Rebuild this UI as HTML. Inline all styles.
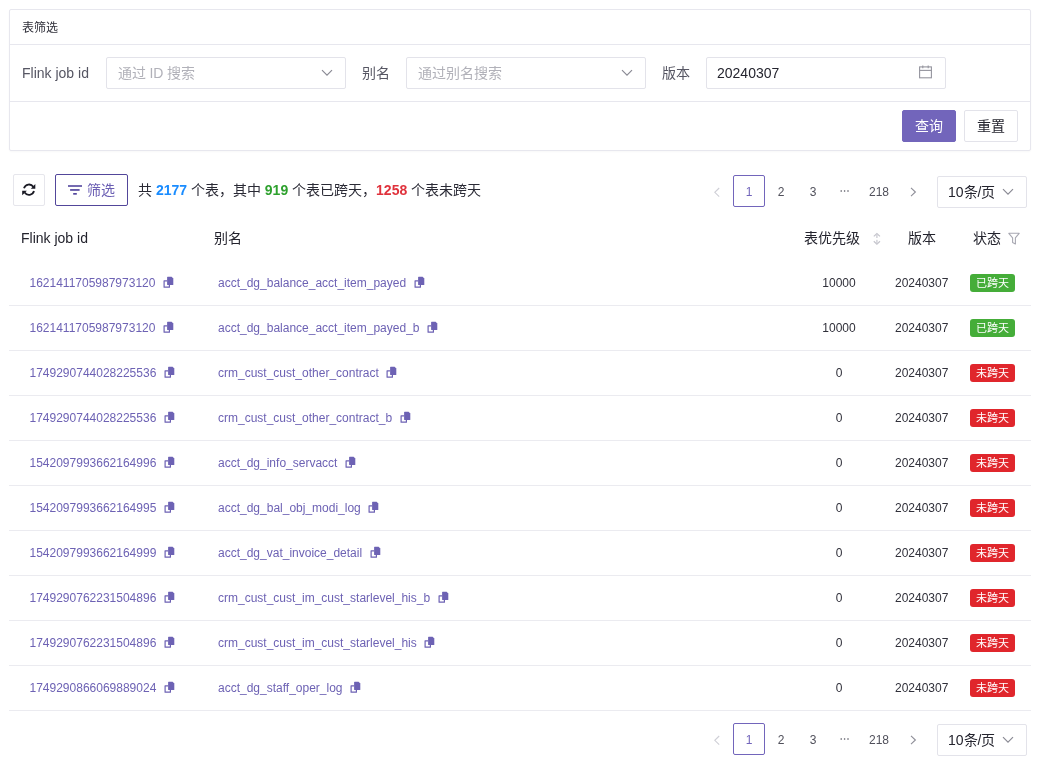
<!DOCTYPE html>
<html lang="zh-CN"><head><meta charset="utf-8">
<style>
*{box-sizing:border-box;margin:0;padding:0}
html,body{width:1037px;height:767px;overflow:hidden;background:#fff}
body{font-family:"Liberation Sans",sans-serif;color:#2a2a35;position:relative;will-change:transform}
.a{position:absolute;white-space:nowrap}
.card{left:9px;top:9px;width:1022px;height:142px;border:1px solid #e7e7ee;border-radius:2px;box-shadow:0 1px 2px rgba(0,0,0,.03)}
.hl{height:1px;background:#e7e7ee}
.lbl{font-size:14px;color:#565663;line-height:16px}
.inp{height:32px;border:1px solid #e3e3ea;border-radius:2px;background:#fff}
.ph{font-size:14px;color:#b1b1b9;line-height:16px}
.btn{height:32px;border-radius:2px;font-size:14px;line-height:30px;text-align:center}
.rowline{left:9px;width:1022px;height:1px;background:#ebebf0}
.id{font-size:12px;color:#6d62b4;line-height:14px}
.num{font-size:12px;color:#30303a;line-height:14px}
.tag{width:45px;height:18px;border-radius:3px;color:#fff;font-size:11px;line-height:19px;text-align:center}
.g{background:#45ad39}
.r{background:#e0262c}
.th{font-size:14px;color:#23232d;line-height:16px}
.pg{font-size:12px;color:#50505b;line-height:14px;text-align:center;width:32px}
</style></head><body>

<!-- filter card -->
<div class="a card"></div>
<div class="a" style="left:22px;top:20.5px;font-size:12px;line-height:14px;color:#30303a">表筛选</div>
<div class="a hl" style="left:10px;top:44px;width:1020px"></div>
<div class="a lbl" style="left:22px;top:65px">Flink job id</div>
<div class="a inp" style="left:106px;top:57px;width:240px"></div>
<div class="a ph" style="left:117.5px;top:65px">通过 ID 搜索</div>
<svg class="a" style="left:321px;top:69px" width="12" height="8" viewBox="0 0 12 8"><path d="M1 1.2 L6 6.2 L11 1.2" fill="none" stroke="#8a8a94" stroke-width="1.2"></path></svg>
<div class="a lbl" style="left:362px;top:65px">别名</div>
<div class="a inp" style="left:406px;top:57px;width:240px"></div>
<div class="a ph" style="left:418px;top:65px">通过别名搜索</div>
<svg class="a" style="left:621px;top:69px" width="12" height="8" viewBox="0 0 12 8"><path d="M1 1.2 L6 6.2 L11 1.2" fill="none" stroke="#8a8a94" stroke-width="1.2"></path></svg>
<div class="a lbl" style="left:662px;top:65px">版本</div>
<div class="a inp" style="left:706px;top:57px;width:240px"></div>
<div class="a" style="left:717px;top:65px;font-size:14px;line-height:16px;color:#24242e">20240307</div>
<svg class="a" style="left:918px;top:64px" width="15" height="15" viewBox="0 0 15 15"><rect x="1.6" y="2.9" width="11.8" height="10.9" fill="none" stroke="#94949e" stroke-width="1.1"></rect><line x1="1.6" y1="6.4" x2="13.4" y2="6.4" stroke="#94949e" stroke-width="1.1"></line><line x1="4.8" y1="1.4" x2="4.8" y2="4.2" stroke="#94949e" stroke-width="1.1"></line><line x1="10.2" y1="1.4" x2="10.2" y2="4.2" stroke="#94949e" stroke-width="1.1"></line></svg>
<div class="a hl" style="left:10px;top:101px;width:1020px"></div>
<div class="a btn" style="left:902px;top:110px;width:54px;background:#7265bb;color:#fff;border:1px solid #7265bb">查询</div>
<div class="a btn" style="left:964px;top:110px;width:54px;border:1px solid #e3e3ea;color:#23232d">重置</div>

<!-- toolbar -->
<div class="a" style="left:13px;top:174px;width:32px;height:32px;border:1px solid #e6e6ec;border-radius:2px"></div>
<svg class="a" style="left:18px;top:179px" width="22" height="22" viewBox="0 0 22 22"><path d="M6 9.3 A5.2 5.2 0 0 1 15.3 7.8" fill="none" stroke="#1a1a24" stroke-width="1.8"></path><path d="M17.3 5 L17.3 9.7 L12.8 9.7 Z" fill="#1a1a24"></path><path d="M16 12.1 A5.2 5.2 0 0 1 6.7 13.6" fill="none" stroke="#1a1a24" stroke-width="1.8"></path><path d="M4.2 11.8 L8.9 11.8 L4.2 16.2 Z" fill="#1a1a24"></path></svg>
<div class="a" style="left:55px;top:174px;width:73px;height:32px;border:1px solid #52469a;border-radius:2px"></div>
<svg class="a" style="left:66px;top:183px" width="18" height="14" viewBox="0 0 18 14"><rect x="2" y="2.2" width="14" height="1.6" fill="#54489f"></rect><rect x="4.1" y="6.1" width="9.5" height="1.7" fill="#54489f"></rect><rect x="7.2" y="10" width="3.6" height="1.7" fill="#54489f"></rect></svg>
<div class="a" style="left:87px;top:182px;font-size:14px;line-height:16px;color:#6a5eb3">筛选</div>
<div class="a" style="left:138px;top:182px;font-size:14px;line-height:16px;color:#2a2a35">共 <b style="color:#1a8cff">2177</b> 个表，其中 <b style="color:#2ea12e">919</b> 个表已跨天，<b style="color:#e0323c">1258</b> 个表未跨天</div>

<!-- pagination top -->
<div id="pgtop"><svg class="a" style="left:712px;top:187px" width="10" height="11" viewBox="0 0 10 11"><path d="M7.2 1 L2.8 5.3 L7.2 9.6" fill="none" stroke="#cfcfd6" stroke-width="1.1"></path></svg><div class="a pg" style="left:733px;top:175px;height:32px;line-height:32px;border:1px solid #7265bb;border-radius:2px;color:#7265bb">1</div><div class="a pg" style="left:765px;top:176px;line-height:32px">2</div><div class="a pg" style="left:797px;top:176px;line-height:32px">3</div><svg class="a" style="left:839px;top:189px" width="12" height="4" viewBox="0 0 12 4"><circle cx="2.2" cy="2" r="0.8" fill="#50505b"></circle><circle cx="5.6" cy="2" r="0.8" fill="#50505b"></circle><circle cx="9" cy="2" r="0.8" fill="#50505b"></circle></svg><div class="a pg" style="left:861px;width:36px;top:176px;line-height:32px">218</div><svg class="a" style="left:908px;top:187px" width="10" height="10" viewBox="0 0 10 10"><path d="M3 0.8 L7.4 5 L3 9.2" fill="none" stroke="#8e8e98" stroke-width="1.1"></path></svg><div class="a" style="left:937px;top:176px;width:90px;height:32px;border:1px solid #e3e3ea;border-radius:2px"></div><div class="a" style="left:948px;top:184px;font-size:14px;line-height:16px;color:#24242e">10条/页</div><svg class="a" style="left:1002px;top:188px" width="12" height="8" viewBox="0 0 12 8"><path d="M1 1.2 L6 6.2 L11 1.2" fill="none" stroke="#8a8a94" stroke-width="1.2"></path></svg></div>

<!-- table header -->
<div class="a th" style="left:21px;top:230px">Flink job id</div>
<div class="a th" style="left:214px;top:230px">别名</div>
<div class="a th" style="left:804px;top:230px">表优先级</div>
<svg class="a" style="left:871px;top:231px" width="12" height="16" viewBox="0 0 12 16"><path d="M2.8 5.4 L5.9 2.6 L9 5.4" fill="none" stroke="#c4c4cc" stroke-width="1.2"></path><rect x="5.2" y="3.4" width="1.4" height="3.6" fill="#cfcfd6"></rect><path d="M2.8 10.3 L5.9 13.2 L9 10.3" fill="none" stroke="#c4c4cc" stroke-width="1.2"></path><rect x="5.2" y="8.8" width="1.4" height="3.6" fill="#cfcfd6"></rect></svg>
<div class="a th" style="left:908px;top:230px">版本</div>
<div class="a th" style="left:973px;top:230px">状态</div>
<svg class="a" style="left:1008px;top:232px" width="13" height="13" viewBox="0 0 13 13"><path d="M0.8 1.3 H11.2 L7.4 5.8 V12 L4.6 10.6 V5.8 Z" fill="none" stroke="#a8a8b2" stroke-width="1.1" stroke-linejoin="round"></path></svg>

<div id="rows"><div class="a id" style="left:29.5px;top:276px">1621411705987973120<span style="display:inline-block;width:8px"></span><svg width="11" height="12" viewBox="0 0 11 12" style="display:inline-block;vertical-align:-1px;margin-left:-0.4px"><path d="M0.5 4.8 Q0.5 4.2 1.1 4.2 H4.1 V5.4 H1.7 V10.6 H5.8 V8.9 H7 V11.2 Q7 11.8 6.4 11.8 H1.1 Q0.5 11.8 0.5 11.2 Z" fill="#6d62b4"></path><path d="M4.1 1.2 Q4.1 0.7 4.6 0.7 H8.6 L10.3 2.4 V8.4 Q10.3 8.9 9.8 8.9 H4.6 Q4.1 8.9 4.1 8.4 Z" fill="#6d62b4"></path></svg></div><div class="a id" style="left:218px;top:276px">acct_dg_balance_acct_item_payed<span style="display:inline-block;width:8px"></span><svg width="11" height="12" viewBox="0 0 11 12" style="display:inline-block;vertical-align:-1px;margin-left:-0.4px"><path d="M0.5 4.8 Q0.5 4.2 1.1 4.2 H4.1 V5.4 H1.7 V10.6 H5.8 V8.9 H7 V11.2 Q7 11.8 6.4 11.8 H1.1 Q0.5 11.8 0.5 11.2 Z" fill="#6d62b4"></path><path d="M4.1 1.2 Q4.1 0.7 4.6 0.7 H8.6 L10.3 2.4 V8.4 Q10.3 8.9 9.8 8.9 H4.6 Q4.1 8.9 4.1 8.4 Z" fill="#6d62b4"></path></svg></div><div class="a num" style="left:789.5px;width:99px;text-align:center;top:276px">10000</div><div class="a num" style="left:895px;top:276px">20240307</div><div class="a tag g" style="left:970px;top:274px">已跨天</div><div class="a rowline" style="top:305px"></div><div class="a id" style="left:29.5px;top:321px">1621411705987973120<span style="display:inline-block;width:8px"></span><svg width="11" height="12" viewBox="0 0 11 12" style="display:inline-block;vertical-align:-1px;margin-left:-0.4px"><path d="M0.5 4.8 Q0.5 4.2 1.1 4.2 H4.1 V5.4 H1.7 V10.6 H5.8 V8.9 H7 V11.2 Q7 11.8 6.4 11.8 H1.1 Q0.5 11.8 0.5 11.2 Z" fill="#6d62b4"></path><path d="M4.1 1.2 Q4.1 0.7 4.6 0.7 H8.6 L10.3 2.4 V8.4 Q10.3 8.9 9.8 8.9 H4.6 Q4.1 8.9 4.1 8.4 Z" fill="#6d62b4"></path></svg></div><div class="a id" style="left:218px;top:321px">acct_dg_balance_acct_item_payed_b<span style="display:inline-block;width:8px"></span><svg width="11" height="12" viewBox="0 0 11 12" style="display:inline-block;vertical-align:-1px;margin-left:-0.4px"><path d="M0.5 4.8 Q0.5 4.2 1.1 4.2 H4.1 V5.4 H1.7 V10.6 H5.8 V8.9 H7 V11.2 Q7 11.8 6.4 11.8 H1.1 Q0.5 11.8 0.5 11.2 Z" fill="#6d62b4"></path><path d="M4.1 1.2 Q4.1 0.7 4.6 0.7 H8.6 L10.3 2.4 V8.4 Q10.3 8.9 9.8 8.9 H4.6 Q4.1 8.9 4.1 8.4 Z" fill="#6d62b4"></path></svg></div><div class="a num" style="left:789.5px;width:99px;text-align:center;top:321px">10000</div><div class="a num" style="left:895px;top:321px">20240307</div><div class="a tag g" style="left:970px;top:319px">已跨天</div><div class="a rowline" style="top:350px"></div><div class="a id" style="left:29.5px;top:366px">1749290744028225536<span style="display:inline-block;width:8px"></span><svg width="11" height="12" viewBox="0 0 11 12" style="display:inline-block;vertical-align:-1px;margin-left:-0.4px"><path d="M0.5 4.8 Q0.5 4.2 1.1 4.2 H4.1 V5.4 H1.7 V10.6 H5.8 V8.9 H7 V11.2 Q7 11.8 6.4 11.8 H1.1 Q0.5 11.8 0.5 11.2 Z" fill="#6d62b4"></path><path d="M4.1 1.2 Q4.1 0.7 4.6 0.7 H8.6 L10.3 2.4 V8.4 Q10.3 8.9 9.8 8.9 H4.6 Q4.1 8.9 4.1 8.4 Z" fill="#6d62b4"></path></svg></div><div class="a id" style="left:218px;top:366px">crm_cust_cust_other_contract<span style="display:inline-block;width:8px"></span><svg width="11" height="12" viewBox="0 0 11 12" style="display:inline-block;vertical-align:-1px;margin-left:-0.4px"><path d="M0.5 4.8 Q0.5 4.2 1.1 4.2 H4.1 V5.4 H1.7 V10.6 H5.8 V8.9 H7 V11.2 Q7 11.8 6.4 11.8 H1.1 Q0.5 11.8 0.5 11.2 Z" fill="#6d62b4"></path><path d="M4.1 1.2 Q4.1 0.7 4.6 0.7 H8.6 L10.3 2.4 V8.4 Q10.3 8.9 9.8 8.9 H4.6 Q4.1 8.9 4.1 8.4 Z" fill="#6d62b4"></path></svg></div><div class="a num" style="left:789.5px;width:99px;text-align:center;top:366px">0</div><div class="a num" style="left:895px;top:366px">20240307</div><div class="a tag r" style="left:970px;top:364px">未跨天</div><div class="a rowline" style="top:395px"></div><div class="a id" style="left:29.5px;top:411px">1749290744028225536<span style="display:inline-block;width:8px"></span><svg width="11" height="12" viewBox="0 0 11 12" style="display:inline-block;vertical-align:-1px;margin-left:-0.4px"><path d="M0.5 4.8 Q0.5 4.2 1.1 4.2 H4.1 V5.4 H1.7 V10.6 H5.8 V8.9 H7 V11.2 Q7 11.8 6.4 11.8 H1.1 Q0.5 11.8 0.5 11.2 Z" fill="#6d62b4"></path><path d="M4.1 1.2 Q4.1 0.7 4.6 0.7 H8.6 L10.3 2.4 V8.4 Q10.3 8.9 9.8 8.9 H4.6 Q4.1 8.9 4.1 8.4 Z" fill="#6d62b4"></path></svg></div><div class="a id" style="left:218px;top:411px">crm_cust_cust_other_contract_b<span style="display:inline-block;width:8px"></span><svg width="11" height="12" viewBox="0 0 11 12" style="display:inline-block;vertical-align:-1px;margin-left:-0.4px"><path d="M0.5 4.8 Q0.5 4.2 1.1 4.2 H4.1 V5.4 H1.7 V10.6 H5.8 V8.9 H7 V11.2 Q7 11.8 6.4 11.8 H1.1 Q0.5 11.8 0.5 11.2 Z" fill="#6d62b4"></path><path d="M4.1 1.2 Q4.1 0.7 4.6 0.7 H8.6 L10.3 2.4 V8.4 Q10.3 8.9 9.8 8.9 H4.6 Q4.1 8.9 4.1 8.4 Z" fill="#6d62b4"></path></svg></div><div class="a num" style="left:789.5px;width:99px;text-align:center;top:411px">0</div><div class="a num" style="left:895px;top:411px">20240307</div><div class="a tag r" style="left:970px;top:409px">未跨天</div><div class="a rowline" style="top:440px"></div><div class="a id" style="left:29.5px;top:456px">1542097993662164996<span style="display:inline-block;width:8px"></span><svg width="11" height="12" viewBox="0 0 11 12" style="display:inline-block;vertical-align:-1px;margin-left:-0.4px"><path d="M0.5 4.8 Q0.5 4.2 1.1 4.2 H4.1 V5.4 H1.7 V10.6 H5.8 V8.9 H7 V11.2 Q7 11.8 6.4 11.8 H1.1 Q0.5 11.8 0.5 11.2 Z" fill="#6d62b4"></path><path d="M4.1 1.2 Q4.1 0.7 4.6 0.7 H8.6 L10.3 2.4 V8.4 Q10.3 8.9 9.8 8.9 H4.6 Q4.1 8.9 4.1 8.4 Z" fill="#6d62b4"></path></svg></div><div class="a id" style="left:218px;top:456px">acct_dg_info_servacct<span style="display:inline-block;width:8px"></span><svg width="11" height="12" viewBox="0 0 11 12" style="display:inline-block;vertical-align:-1px;margin-left:-0.4px"><path d="M0.5 4.8 Q0.5 4.2 1.1 4.2 H4.1 V5.4 H1.7 V10.6 H5.8 V8.9 H7 V11.2 Q7 11.8 6.4 11.8 H1.1 Q0.5 11.8 0.5 11.2 Z" fill="#6d62b4"></path><path d="M4.1 1.2 Q4.1 0.7 4.6 0.7 H8.6 L10.3 2.4 V8.4 Q10.3 8.9 9.8 8.9 H4.6 Q4.1 8.9 4.1 8.4 Z" fill="#6d62b4"></path></svg></div><div class="a num" style="left:789.5px;width:99px;text-align:center;top:456px">0</div><div class="a num" style="left:895px;top:456px">20240307</div><div class="a tag r" style="left:970px;top:454px">未跨天</div><div class="a rowline" style="top:485px"></div><div class="a id" style="left:29.5px;top:501px">1542097993662164995<span style="display:inline-block;width:8px"></span><svg width="11" height="12" viewBox="0 0 11 12" style="display:inline-block;vertical-align:-1px;margin-left:-0.4px"><path d="M0.5 4.8 Q0.5 4.2 1.1 4.2 H4.1 V5.4 H1.7 V10.6 H5.8 V8.9 H7 V11.2 Q7 11.8 6.4 11.8 H1.1 Q0.5 11.8 0.5 11.2 Z" fill="#6d62b4"></path><path d="M4.1 1.2 Q4.1 0.7 4.6 0.7 H8.6 L10.3 2.4 V8.4 Q10.3 8.9 9.8 8.9 H4.6 Q4.1 8.9 4.1 8.4 Z" fill="#6d62b4"></path></svg></div><div class="a id" style="left:218px;top:501px">acct_dg_bal_obj_modi_log<span style="display:inline-block;width:8px"></span><svg width="11" height="12" viewBox="0 0 11 12" style="display:inline-block;vertical-align:-1px;margin-left:-0.4px"><path d="M0.5 4.8 Q0.5 4.2 1.1 4.2 H4.1 V5.4 H1.7 V10.6 H5.8 V8.9 H7 V11.2 Q7 11.8 6.4 11.8 H1.1 Q0.5 11.8 0.5 11.2 Z" fill="#6d62b4"></path><path d="M4.1 1.2 Q4.1 0.7 4.6 0.7 H8.6 L10.3 2.4 V8.4 Q10.3 8.9 9.8 8.9 H4.6 Q4.1 8.9 4.1 8.4 Z" fill="#6d62b4"></path></svg></div><div class="a num" style="left:789.5px;width:99px;text-align:center;top:501px">0</div><div class="a num" style="left:895px;top:501px">20240307</div><div class="a tag r" style="left:970px;top:499px">未跨天</div><div class="a rowline" style="top:530px"></div><div class="a id" style="left:29.5px;top:546px">1542097993662164999<span style="display:inline-block;width:8px"></span><svg width="11" height="12" viewBox="0 0 11 12" style="display:inline-block;vertical-align:-1px;margin-left:-0.4px"><path d="M0.5 4.8 Q0.5 4.2 1.1 4.2 H4.1 V5.4 H1.7 V10.6 H5.8 V8.9 H7 V11.2 Q7 11.8 6.4 11.8 H1.1 Q0.5 11.8 0.5 11.2 Z" fill="#6d62b4"></path><path d="M4.1 1.2 Q4.1 0.7 4.6 0.7 H8.6 L10.3 2.4 V8.4 Q10.3 8.9 9.8 8.9 H4.6 Q4.1 8.9 4.1 8.4 Z" fill="#6d62b4"></path></svg></div><div class="a id" style="left:218px;top:546px">acct_dg_vat_invoice_detail<span style="display:inline-block;width:8px"></span><svg width="11" height="12" viewBox="0 0 11 12" style="display:inline-block;vertical-align:-1px;margin-left:-0.4px"><path d="M0.5 4.8 Q0.5 4.2 1.1 4.2 H4.1 V5.4 H1.7 V10.6 H5.8 V8.9 H7 V11.2 Q7 11.8 6.4 11.8 H1.1 Q0.5 11.8 0.5 11.2 Z" fill="#6d62b4"></path><path d="M4.1 1.2 Q4.1 0.7 4.6 0.7 H8.6 L10.3 2.4 V8.4 Q10.3 8.9 9.8 8.9 H4.6 Q4.1 8.9 4.1 8.4 Z" fill="#6d62b4"></path></svg></div><div class="a num" style="left:789.5px;width:99px;text-align:center;top:546px">0</div><div class="a num" style="left:895px;top:546px">20240307</div><div class="a tag r" style="left:970px;top:544px">未跨天</div><div class="a rowline" style="top:575px"></div><div class="a id" style="left:29.5px;top:591px">1749290762231504896<span style="display:inline-block;width:8px"></span><svg width="11" height="12" viewBox="0 0 11 12" style="display:inline-block;vertical-align:-1px;margin-left:-0.4px"><path d="M0.5 4.8 Q0.5 4.2 1.1 4.2 H4.1 V5.4 H1.7 V10.6 H5.8 V8.9 H7 V11.2 Q7 11.8 6.4 11.8 H1.1 Q0.5 11.8 0.5 11.2 Z" fill="#6d62b4"></path><path d="M4.1 1.2 Q4.1 0.7 4.6 0.7 H8.6 L10.3 2.4 V8.4 Q10.3 8.9 9.8 8.9 H4.6 Q4.1 8.9 4.1 8.4 Z" fill="#6d62b4"></path></svg></div><div class="a id" style="left:218px;top:591px">crm_cust_cust_im_cust_starlevel_his_b<span style="display:inline-block;width:8px"></span><svg width="11" height="12" viewBox="0 0 11 12" style="display:inline-block;vertical-align:-1px;margin-left:-0.4px"><path d="M0.5 4.8 Q0.5 4.2 1.1 4.2 H4.1 V5.4 H1.7 V10.6 H5.8 V8.9 H7 V11.2 Q7 11.8 6.4 11.8 H1.1 Q0.5 11.8 0.5 11.2 Z" fill="#6d62b4"></path><path d="M4.1 1.2 Q4.1 0.7 4.6 0.7 H8.6 L10.3 2.4 V8.4 Q10.3 8.9 9.8 8.9 H4.6 Q4.1 8.9 4.1 8.4 Z" fill="#6d62b4"></path></svg></div><div class="a num" style="left:789.5px;width:99px;text-align:center;top:591px">0</div><div class="a num" style="left:895px;top:591px">20240307</div><div class="a tag r" style="left:970px;top:589px">未跨天</div><div class="a rowline" style="top:620px"></div><div class="a id" style="left:29.5px;top:636px">1749290762231504896<span style="display:inline-block;width:8px"></span><svg width="11" height="12" viewBox="0 0 11 12" style="display:inline-block;vertical-align:-1px;margin-left:-0.4px"><path d="M0.5 4.8 Q0.5 4.2 1.1 4.2 H4.1 V5.4 H1.7 V10.6 H5.8 V8.9 H7 V11.2 Q7 11.8 6.4 11.8 H1.1 Q0.5 11.8 0.5 11.2 Z" fill="#6d62b4"></path><path d="M4.1 1.2 Q4.1 0.7 4.6 0.7 H8.6 L10.3 2.4 V8.4 Q10.3 8.9 9.8 8.9 H4.6 Q4.1 8.9 4.1 8.4 Z" fill="#6d62b4"></path></svg></div><div class="a id" style="left:218px;top:636px">crm_cust_cust_im_cust_starlevel_his<span style="display:inline-block;width:8px"></span><svg width="11" height="12" viewBox="0 0 11 12" style="display:inline-block;vertical-align:-1px;margin-left:-0.4px"><path d="M0.5 4.8 Q0.5 4.2 1.1 4.2 H4.1 V5.4 H1.7 V10.6 H5.8 V8.9 H7 V11.2 Q7 11.8 6.4 11.8 H1.1 Q0.5 11.8 0.5 11.2 Z" fill="#6d62b4"></path><path d="M4.1 1.2 Q4.1 0.7 4.6 0.7 H8.6 L10.3 2.4 V8.4 Q10.3 8.9 9.8 8.9 H4.6 Q4.1 8.9 4.1 8.4 Z" fill="#6d62b4"></path></svg></div><div class="a num" style="left:789.5px;width:99px;text-align:center;top:636px">0</div><div class="a num" style="left:895px;top:636px">20240307</div><div class="a tag r" style="left:970px;top:634px">未跨天</div><div class="a rowline" style="top:665px"></div><div class="a id" style="left:29.5px;top:681px">1749290866069889024<span style="display:inline-block;width:8px"></span><svg width="11" height="12" viewBox="0 0 11 12" style="display:inline-block;vertical-align:-1px;margin-left:-0.4px"><path d="M0.5 4.8 Q0.5 4.2 1.1 4.2 H4.1 V5.4 H1.7 V10.6 H5.8 V8.9 H7 V11.2 Q7 11.8 6.4 11.8 H1.1 Q0.5 11.8 0.5 11.2 Z" fill="#6d62b4"></path><path d="M4.1 1.2 Q4.1 0.7 4.6 0.7 H8.6 L10.3 2.4 V8.4 Q10.3 8.9 9.8 8.9 H4.6 Q4.1 8.9 4.1 8.4 Z" fill="#6d62b4"></path></svg></div><div class="a id" style="left:218px;top:681px">acct_dg_staff_oper_log<span style="display:inline-block;width:8px"></span><svg width="11" height="12" viewBox="0 0 11 12" style="display:inline-block;vertical-align:-1px;margin-left:-0.4px"><path d="M0.5 4.8 Q0.5 4.2 1.1 4.2 H4.1 V5.4 H1.7 V10.6 H5.8 V8.9 H7 V11.2 Q7 11.8 6.4 11.8 H1.1 Q0.5 11.8 0.5 11.2 Z" fill="#6d62b4"></path><path d="M4.1 1.2 Q4.1 0.7 4.6 0.7 H8.6 L10.3 2.4 V8.4 Q10.3 8.9 9.8 8.9 H4.6 Q4.1 8.9 4.1 8.4 Z" fill="#6d62b4"></path></svg></div><div class="a num" style="left:789.5px;width:99px;text-align:center;top:681px">0</div><div class="a num" style="left:895px;top:681px">20240307</div><div class="a tag r" style="left:970px;top:679px">未跨天</div><div class="a rowline" style="top:710px"></div></div>
<div id="pgbot"><svg class="a" style="left:712px;top:735px" width="10" height="11" viewBox="0 0 10 11"><path d="M7.2 1 L2.8 5.3 L7.2 9.6" fill="none" stroke="#cfcfd6" stroke-width="1.1"></path></svg><div class="a pg" style="left:733px;top:723px;height:32px;line-height:32px;border:1px solid #7265bb;border-radius:2px;color:#7265bb">1</div><div class="a pg" style="left:765px;top:724px;line-height:32px">2</div><div class="a pg" style="left:797px;top:724px;line-height:32px">3</div><svg class="a" style="left:839px;top:737px" width="12" height="4" viewBox="0 0 12 4"><circle cx="2.2" cy="2" r="0.8" fill="#50505b"></circle><circle cx="5.6" cy="2" r="0.8" fill="#50505b"></circle><circle cx="9" cy="2" r="0.8" fill="#50505b"></circle></svg><div class="a pg" style="left:861px;width:36px;top:724px;line-height:32px">218</div><svg class="a" style="left:908px;top:735px" width="10" height="10" viewBox="0 0 10 10"><path d="M3 0.8 L7.4 5 L3 9.2" fill="none" stroke="#8e8e98" stroke-width="1.1"></path></svg><div class="a" style="left:937px;top:724px;width:90px;height:32px;border:1px solid #e3e3ea;border-radius:2px"></div><div class="a" style="left:948px;top:732px;font-size:14px;line-height:16px;color:#24242e">10条/页</div><svg class="a" style="left:1002px;top:736px" width="12" height="8" viewBox="0 0 12 8"><path d="M1 1.2 L6 6.2 L11 1.2" fill="none" stroke="#8a8a94" stroke-width="1.2"></path></svg></div>



</body></html>
